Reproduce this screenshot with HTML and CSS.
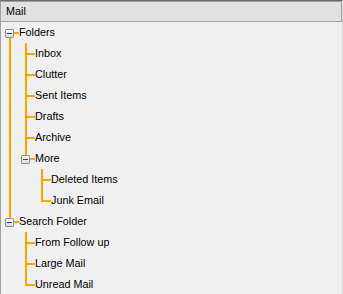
FILE: index.html
```html
<!DOCTYPE html>
<html>
<head>
<meta charset="utf-8">
<link rel="stylesheet" href="styles.css">
</head>
<body>
<div class="panel">
  <div class="header">Mail</div>
  <ul class="tree root">
    <li class="node first open">
      <span class="box"></span>
      <div class="row">Folders</div>
      <ul class="tree">
        <li class="node"><div class="row">Inbox</div></li>
        <li class="node"><div class="row">Clutter</div></li>
        <li class="node"><div class="row">Sent Items</div></li>
        <li class="node"><div class="row">Drafts</div></li>
        <li class="node"><div class="row">Archive</div></li>
        <li class="node last open">
          <span class="box"></span>
          <div class="row">More</div>
          <ul class="tree">
            <li class="node"><div class="row">Deleted Items</div></li>
            <li class="node last"><div class="row">Junk Email</div></li>
          </ul>
        </li>
      </ul>
    </li>
    <li class="node last open">
      <span class="box"></span>
      <div class="row">Search Folder</div>
      <ul class="tree">
        <li class="node"><div class="row">From Follow up</div></li>
        <li class="node"><div class="row">Large Mail</div></li>
        <li class="node last"><div class="row">Unread Mail</div></li>
      </ul>
    </li>
  </ul>
</div>
</body>
</html>
```
FILE: styles.css
```css
html, body {
  margin: 0;
  padding: 0;
  background: #f0f0f0;
}
.panel {
  width: 343px;
  height: 294px;
  box-sizing: border-box;
  border-top: 1px solid #6b6b6b;
  border-left: 1px solid #a0a0a0;
  border-right: 1px solid #d8d8d8;
  background: #f0f0f0;
  overflow: hidden;
  font-family: "Liberation Sans", Arial, sans-serif;
  font-size: 10.8px;
  color: #000;
}
.header {
  height: 19px;
  line-height: 19px;
  background: #e1e1e1;
  border: 1px solid #a0a0a0;
  border-left: none;
  padding-left: 5px;
}
.tree {
  list-style: none;
  margin: 0;
  padding: 0 0 0 16px;
}
.tree.root {
  padding-left: 0;
}
.node {
  position: relative;
}
.row {
  height: 21px;
  line-height: 21px;
  padding-left: 18px;
  white-space: nowrap;
  position: relative;
}
/* vertical connector */
.node::before {
  content: "";
  position: absolute;
  left: 8px;
  top: 0;
  bottom: 0;
  width: 2px;
  background: #ffa500;
}
.node.last::before {
  bottom: auto;
  height: 12px;
}
.node.first::before {
  top: 10px;
}
/* horizontal stub */
.node::after {
  content: "";
  position: absolute;
  left: 8px;
  top: 10px;
  width: 10px;
  height: 2px;
  background: #ffa500;
}
.box {
  position: absolute;
  left: 4px;
  top: 7px;
  width: 7px;
  height: 7px;
  border: 1px solid #8e8f8f;
  border-radius: 1px;
  background: linear-gradient(#ffffff, #dcdcdc);
  z-index: 2;
}
.box::after {
  content: "";
  position: absolute;
  left: 1px;
  top: 3px;
  width: 5px;
  height: 1px;
  background: #2b3f7e;
}
```
